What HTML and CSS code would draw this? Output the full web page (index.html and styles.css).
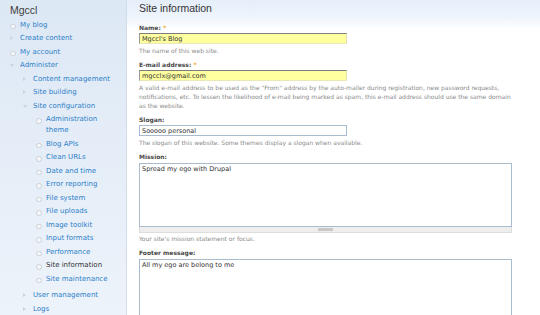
FILE: index.html
```html
<!DOCTYPE html>
<html lang="en">
  <head>
    <meta charset="UTF-8" />
    <title>Site information | Mgccl's Blog</title>
    <link rel="stylesheet" href="styles.css">
  </head>
  <body>
    <div class="page">
      <aside class="sidebar">
        <h2 class="block-title">Mgccl</h2>
        <ul class="menu">
          <li class="leaf"><a href="#">My blog</a></li>
          <li class="collapsed"><a href="#">Create content</a></li>
          <li class="leaf"><a href="#">My account</a></li>
          <li class="expanded">
            <a href="#">Administer</a>
            <ul class="menu">
              <li class="collapsed"><a href="#">Content management</a></li>
              <li class="collapsed"><a href="#">Site building</a></li>
              <li class="expanded">
                <a href="#">Site configuration</a>
                <ul class="menu">
                  <li class="leaf"><a href="#">Administration theme</a></li>
                  <li class="leaf"><a href="#">Blog APIs</a></li>
                  <li class="leaf"><a href="#">Clean URLs</a></li>
                  <li class="leaf"><a href="#">Date and time</a></li>
                  <li class="leaf"><a href="#">Error reporting</a></li>
                  <li class="leaf"><a href="#">File system</a></li>
                  <li class="leaf"><a href="#">File uploads</a></li>
                  <li class="leaf"><a href="#">Image toolkit</a></li>
                  <li class="leaf"><a href="#">Input formats</a></li>
                  <li class="leaf"><a href="#">Performance</a></li>
                  <li class="leaf"><a href="#" class="active">Site information</a></li>
                  <li class="leaf"><a href="#">Site maintenance</a></li>
                </ul>
              </li>
              <li class="collapsed"><a href="#">User management</a></li>
              <li class="collapsed"><a href="#">Logs</a></li>
            </ul>
          </li>
        </ul>
      </aside>

      <main class="content">
        <h1 class="title">Site information</h1>
        <form class="settings-form">
          <div class="form-item">
            <label for="site-name">Name: <span class="form-required">*</span></label>
            <input type="text" id="site-name" class="form-text autofill" value="Mgccl's Blog" />
            <div class="description">The name of this web site.</div>
          </div>

          <div class="form-item">
            <label for="site-mail">E-mail address: <span class="form-required">*</span></label>
            <input type="text" id="site-mail" class="form-text autofill" value="mgcclx@gmail.com" />
            <div class="description">
              A valid e-mail address to be used as the "From" address by the auto-mailer during registration, new password requests, notifications, etc. To lessen the likelihood of e-mail being marked as spam, this e-mail address should use the same domain as the website.
            </div>
          </div>

          <div class="form-item">
            <label for="site-slogan">Slogan:</label>
            <input type="text" id="site-slogan" class="form-text" value="Sooooo personal" />
            <div class="description">The slogan of this website. Some themes display a slogan when available.</div>
          </div>

          <div class="form-item">
            <label for="site-mission">Mission:</label>
            <div class="resizable">
              <textarea id="site-mission" class="form-textarea">Spread my ego with Drupal</textarea>
              <div class="grippie"></div>
            </div>
            <div class="description">Your site's mission statement or focus.</div>
          </div>

          <div class="form-item">
            <label for="site-footer">Footer message:</label>
            <textarea id="site-footer" class="form-textarea form-textarea-tall">All my ego are belong to me</textarea>
          </div>
        </form>
      </main>
    </div>
  </body>
</html>
```

FILE: styles.css
```css
:root {
  --link: #2d80c8;
  --text: #494949;
  --text-muted: #8a8a8a;
  --required: #f5a322;
  --field-border: #a9bbcf;
  --autofill: #ffffa0;
}

* {
  margin: 0;
  padding: 0;
  box-sizing: border-box;
}

body {
  font-family: "DejaVu Sans", Verdana, sans-serif;
  color: var(--text);
  background: #fff;
  overflow: hidden;
}

.page {
  display: flex;
  height: 315px;
  overflow: hidden;
}

/* left sidebar */

.sidebar {
  width: 127px;
  flex-shrink: 0;
  padding-right: 12px;
  background: linear-gradient(#dde8f5, #edf3fa);
  border-right: 1px solid #d1ddea;
}

.block-title {
  font-family: "Liberation Sans", Arial, sans-serif;
  font-size: 10.5px;
  font-weight: normal;
  line-height: 12px;
  color: #3d3d3d;
  margin: 4px 0 1px 10px;
}

.menu {
  list-style: none;
  padding-left: 9px;
}

.menu .menu {
  padding-left: 2px;
  padding-bottom: 3px;
}

.menu li {
  position: relative;
  padding: 2.5px 0 0 11px;
  font-size: 7px;
  line-height: 11px;
}

.menu li::before {
  content: "";
  position: absolute;
  left: 1px;
}

.menu li.leaf::before {
  top: 6.5px;
  width: 3.5px;
  height: 3.5px;
  border: 1px solid #c9d0d7;
  border-radius: 50%;
  background: #f5f7f9;
}

.menu li.collapsed::before {
  top: 5.5px;
  border-top: 2.5px solid transparent;
  border-bottom: 2.5px solid transparent;
  border-left: 3.5px solid #ccd3da;
}

.menu li.expanded::before {
  top: 6.5px;
  border-left: 2.5px solid transparent;
  border-right: 2.5px solid transparent;
  border-top: 3.5px solid #ccd3da;
}

.menu a {
  color: var(--link);
  text-decoration: none;
}

.menu a.active {
  color: #333;
}

/* main content */

.content {
  flex: 1;
  padding: 2px 22px 0 12px;
  background: linear-gradient(#e5eefa 0, #eef4fc 16px, #f7fafd 24px, #fff 29px);
}

.title {
  font-family: "Liberation Sans", Arial, sans-serif;
  font-size: 10.5px;
  font-weight: normal;
  line-height: 13px;
  color: #333;
  margin-bottom: 9px;
}

.form-item {
  margin-bottom: 6px;
}

.form-item label {
  display: block;
  font-size: 6px;
  font-weight: bold;
  line-height: 8px;
  color: var(--text);
}

.form-required {
  color: var(--required);
}

.form-text {
  display: block;
  width: 208px;
  height: 11px;
  margin-top: 1px;
  padding: 0 2px;
  font-family: "DejaVu Sans", Verdana, sans-serif;
  font-size: 6.5px;
  color: #333;
  background: #fff;
  border: 1px solid var(--field-border);
  outline: none;
}

.form-text.autofill {
  background: var(--autofill);
  border-color: #7d7d7d #e2e2b0 #e8e8b8 #9a9a9a;
}

.description {
  margin-top: 2px;
  font-size: 6px;
  line-height: 9px;
  color: var(--text-muted);
}

.resizable {
  width: 373px;
  margin-top: 2px;
}

.resizable + .description {
  margin-top: 1px;
}

.form-textarea {
  display: block;
  width: 373px;
  height: 64px;
  padding: 1px 2px;
  font-family: "DejaVu Sans", Verdana, sans-serif;
  font-size: 6.5px;
  line-height: 9px;
  color: #333;
  border: 1px solid var(--field-border);
  resize: none;
  outline: none;
}

.form-textarea-tall {
  height: 90px;
  margin-top: 2px;
}

.grippie {
  height: 6px;
  background: #eee;
  border: 1px solid #ddd;
  border-top: 0;
  display: flex;
  justify-content: center;
  align-items: center;
}

.grippie::after {
  content: "";
  width: 15px;
  height: 3px;
  background: #c8c8c8;
}
```
